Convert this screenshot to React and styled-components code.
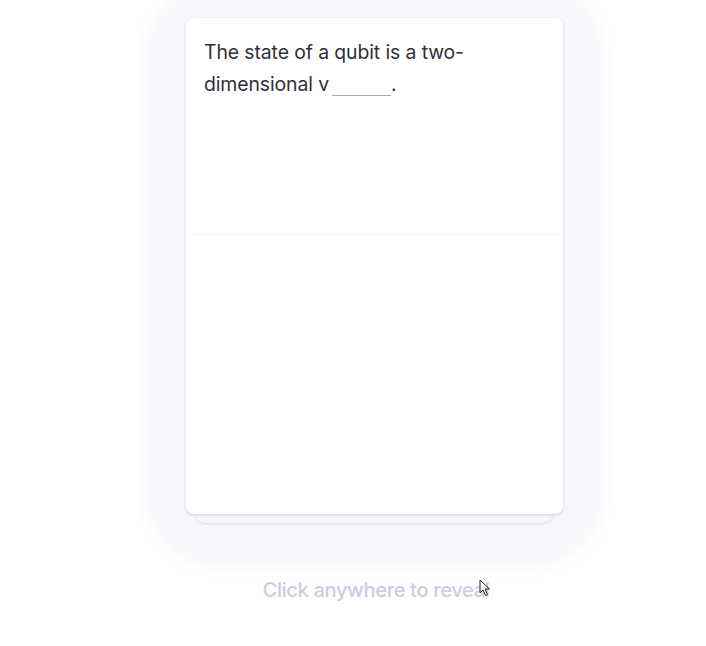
import React from 'react';
import styled, { createGlobalStyle } from 'styled-components';

const GlobalStyle = createGlobalStyle`
  html, body {
    margin: 0;
    padding: 0;
    background: #ffffff;
    font-family: Inter, "Noto Sans", sans-serif;
  }
`;

const Page = styled.div`
  width: 706px;
  height: 646px;
  overflow: hidden;
  position: relative;
`;

const Column = styled.div`
  width: 377px;
  margin-left: 186px;
  padding-top: 18px;
  display: flex;
  flex-direction: column;
  align-items: center;
`;

const Stack = styled.div`
  position: relative;
  width: 100%;
  height: 505px;
  border-radius: 34px;
  box-shadow: 0 4px 14px 42px #f8f7fb;
`;

const BackCard = styled.div`
  position: absolute;
  left: 9px;
  right: 10px;
  bottom: 0;
  height: 40px;
  background: #f8f7fb;
  border-radius: 0 0 10px 10px;
  box-shadow: 0 1px 2px rgba(180, 175, 200, 0.35);
`;

const Card = styled.div`
  position: relative;
  height: 496px;
  background: #ffffff;
  border-radius: 8px;
  box-shadow: 0 1px 3px rgba(160, 155, 185, 0.45);
  display: flex;
  flex-direction: column;
`;

const Front = styled.div`
  height: 217px;
  padding: 18px 3px 0 12px;
  box-sizing: border-box;
  border-bottom: 1px solid #f1f0f4;
  margin: 0 3px 0 6px;
`;

const Question = styled.p`
  margin: 0;
  font-size: 19.4px;
  line-height: 32px;
  color: #2e303a;
  letter-spacing: -0.1px;
  max-width: 300px;
`;

const Blank = styled.span`
  display: inline-block;
  width: 59px;
  height: 20px;
  margin-left: 3px;
  border-bottom: 1px solid #a9a8b4;
  vertical-align: -5px;
`;

const Hint = styled.div`
  margin-top: 54px;
  margin-left: 3px;
  position: relative;
  font-size: 20.2px;
  font-weight: 500;
  color: #cdcbe0;
  letter-spacing: -0.4px;
`;

const Cursor = styled.svg`
  position: absolute;
  right: -2px;
  top: 2px;
`;

export default function App() {
  return (
    <Page>
      <GlobalStyle />
      <Column>
        <Stack>
          <BackCard />
          <Card>
            <Front>
              <Question>
                The state of a qubit is a two-dimensional v<Blank />.
              </Question>
            </Front>
          </Card>
        </Stack>
        <Hint>
          Click anywhere to reveal
          <Cursor width="12" height="18" viewBox="0 0 12 18">
            <path d="M1 1 L1 14 L4 11 L6.5 16.5 L8.5 15.5 L6 10 L10.5 10 Z" fill="#ffffff" stroke="#222" strokeWidth="1" strokeLinejoin="round" />
          </Cursor>
        </Hint>
      </Column>
    </Page>
  );
}
